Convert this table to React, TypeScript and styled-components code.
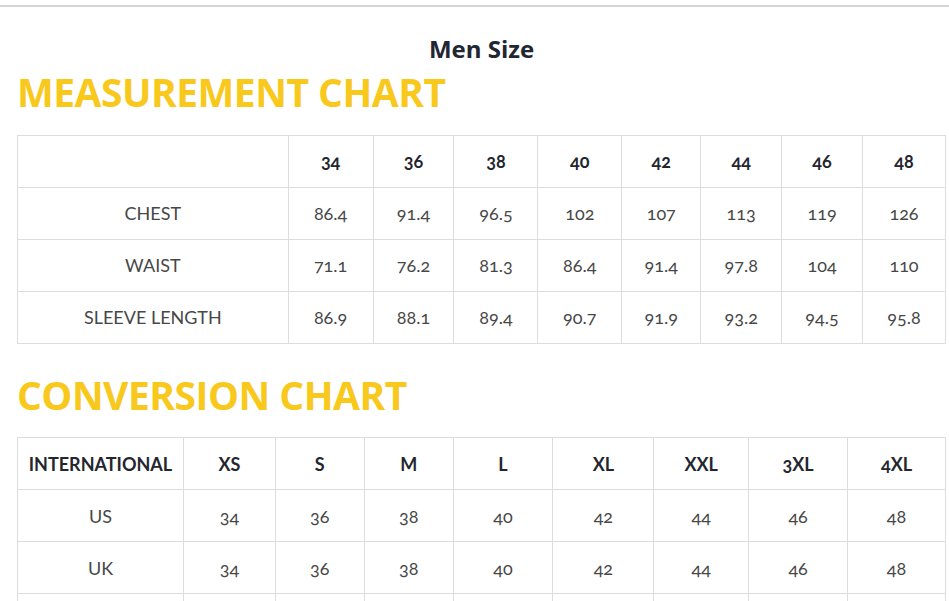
import React from 'react';
import styled, { createGlobalStyle } from 'styled-components';

const GlobalStyle = createGlobalStyle`
  body {
    margin: 0;
    background: #ffffff;
    font-family: Lato, "Open Sans", sans-serif;
  }
`;

const Page = styled.div`
  padding-top: 5px;
  height: 596px;
  overflow: hidden;
`;

const TopRule = styled.div`
  border-top: 2px solid #d4d4d4;
`;

const Content = styled.div`
  padding: 0 3px 0 17px;
`;

const Title = styled.h3`
  margin: 28px 0 0;
  text-align: center;
  font-family: "Open Sans", sans-serif;
  font-weight: 700;
  font-size: 24px;
  line-height: 1.2;
  color: #222631;
`;

const ChartHeading = styled.h2<{ $gap: number }>`
  margin: ${p => p.$gap}px 0 19px;
  font-family: "Open Sans", sans-serif;
  font-weight: 700;
  font-size: 39px;
  line-height: 1.2;
  letter-spacing: -0.5px;
  color: #f8c81c;
`;

const Table = styled.table`
  border-collapse: collapse;
  border: 1px solid #dddddd;
`;

const HeadCell = styled.th<{ $w: number }>`
  width: ${p => p.$w}px;
  height: 51px;
  padding: 0;
  border: 1px solid #dddddd;
  text-align: center;
  font-family: Lato, sans-serif;
  font-weight: 700;
  font-size: 18px;
  font-variant-numeric: oldstyle-nums;
  color: #23262e;
`;

const Cell = styled.td`
  height: 51px;
  padding: 0;
  border: 1px solid #dddddd;
  text-align: center;
  font-family: Lato, sans-serif;
  font-weight: 400;
  font-size: 18px;
  font-variant-numeric: oldstyle-nums;
  color: #474747;
`;

type Chart = {
  widths: number[];
  head: string[];
  rows: string[][];
};

const measurement: Chart = {
  widths: [270, 84, 80, 83, 83, 78, 80, 80, 82],
  head: ['', '34', '36', '38', '40', '42', '44', '46', '48'],
  rows: [
    ['CHEST', '86.4', '91.4', '96.5', '102', '107', '113', '119', '126'],
    ['WAIST', '71.1', '76.2', '81.3', '86.4', '91.4', '97.8', '104', '110'],
    ['SLEEVE LENGTH', '86.9', '88.1', '89.4', '90.7', '91.9', '93.2', '94.5', '95.8'],
  ],
};

const conversion: Chart = {
  widths: [165, 91, 88, 88, 99, 100, 94, 98, 97],
  head: ['INTERNATIONAL', 'XS', 'S', 'M', 'L', 'XL', 'XXL', '3XL', '4XL'],
  rows: [
    ['US', '34', '36', '38', '40', '42', '44', '46', '48'],
    ['UK', '34', '36', '38', '40', '42', '44', '46', '48'],
    ['EU', '44', '46', '48', '50', '52', '54', '56', '58'],
  ],
};

const SizeTable = ({ chart }: { chart: Chart }) => (
  <Table>
    <thead>
      <tr>
        {chart.head.map((h, i) => (
          <HeadCell key={i} $w={chart.widths[i]}>{h}</HeadCell>
        ))}
      </tr>
    </thead>
    <tbody>
      {chart.rows.map(row => (
        <tr key={row[0]}>
          {row.map((v, i) => (
            <Cell key={i}>{v}</Cell>
          ))}
        </tr>
      ))}
    </tbody>
  </Table>
);

export default function App() {
  return (
    <>
      <GlobalStyle />
      <Page>
        <TopRule />
        <Content>
          <Title>Men Size</Title>
          <ChartHeading $gap={5}>MEASUREMENT CHART</ChartHeading>
          <SizeTable chart={measurement} />
          <ChartHeading $gap={28}>CONVERSION CHART</ChartHeading>
          <SizeTable chart={conversion} />
        </Content>
      </Page>
    </>
  );
}
